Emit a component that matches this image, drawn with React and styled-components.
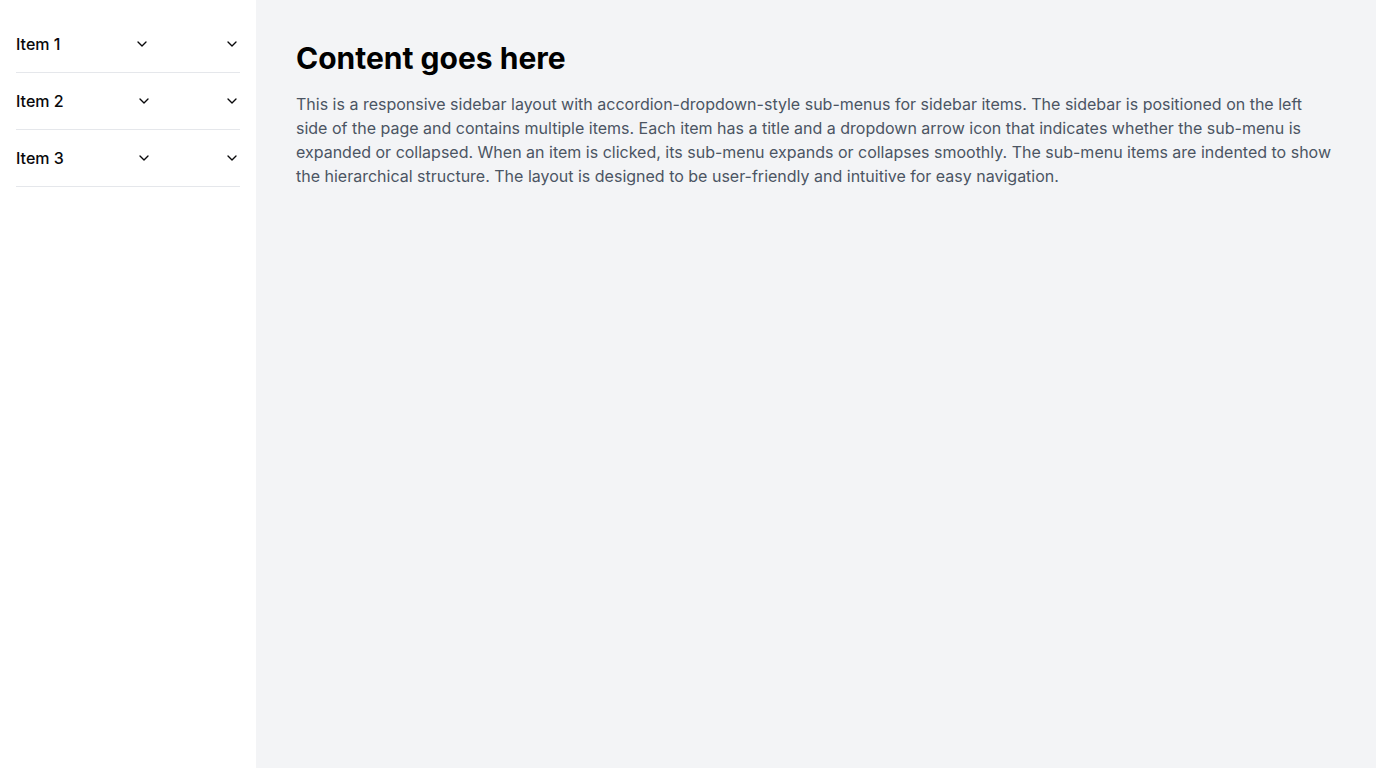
import React from 'react'
import styled, { createGlobalStyle } from 'styled-components'
import { ChevronDown } from 'lucide-react'

const items = ['Item 1', 'Item 2', 'Item 3']

const App = () => (
  <>
    <GlobalStyle />
    <Layout>
      <Sidebar>
        {items.map((item) => (
          <AccordionItem key={item}>
            <Trigger type="button">
              <Label>{item}</Label>
              <ChevronDown size={16} strokeWidth={2} />
              <ChevronDown size={16} strokeWidth={2} />
            </Trigger>
          </AccordionItem>
        ))}
      </Sidebar>
      <Main>
        <Title>Content goes here</Title>
        <Text>
          This is a responsive sidebar layout with accordion-dropdown-style sub-menus for sidebar
          items. The sidebar is positioned on the left side of the page and contains multiple items.
          Each item has a title and a dropdown arrow icon that indicates whether the sub-menu is
          expanded or collapsed. When an item is clicked, its sub-menu expands or collapses smoothly.
          The sub-menu items are indented to show the hierarchical structure. The layout is designed
          to be user-friendly and intuitive for easy navigation.
        </Text>
      </Main>
    </Layout>
  </>
)

const GlobalStyle = createGlobalStyle`
  * {
    box-sizing: border-box;
  }
  body {
    margin: 0;
    font-family: Inter, "Noto Sans", sans-serif;
    color: #030712;
  }
`

const Layout = styled.div`
  display: flex;
  min-height: 100vh;
`

const Sidebar = styled.aside`
  width: 256px;
  flex-shrink: 0;
  background: #fff;
  padding: 16px;
`

const AccordionItem = styled.div`
  border-bottom: 1px solid #e5e7eb;
`

const Trigger = styled.button`
  display: flex;
  width: 100%;
  align-items: center;
  justify-content: space-between;
  padding: 16px 0;
  border: 0;
  background: none;
  font: inherit;
  font-size: 16px;
  line-height: 24px;
  font-weight: 500;
  color: #09090b;
  cursor: pointer;
  text-align: left;

  svg {
    flex-shrink: 0;
  }
`

const Label = styled.span``

const Main = styled.main`
  flex: 1;
  background: #f3f4f6;
  padding: 40px;
`

const Title = styled.h1`
  margin: 0 0 16px;
  font-size: 30px;
  line-height: 36px;
  font-weight: 700;
  color: #000;
`

const Text = styled.p`
  margin: 0;
  font-size: 16px;
  line-height: 24px;
  color: #4b5563;
`

export default App
